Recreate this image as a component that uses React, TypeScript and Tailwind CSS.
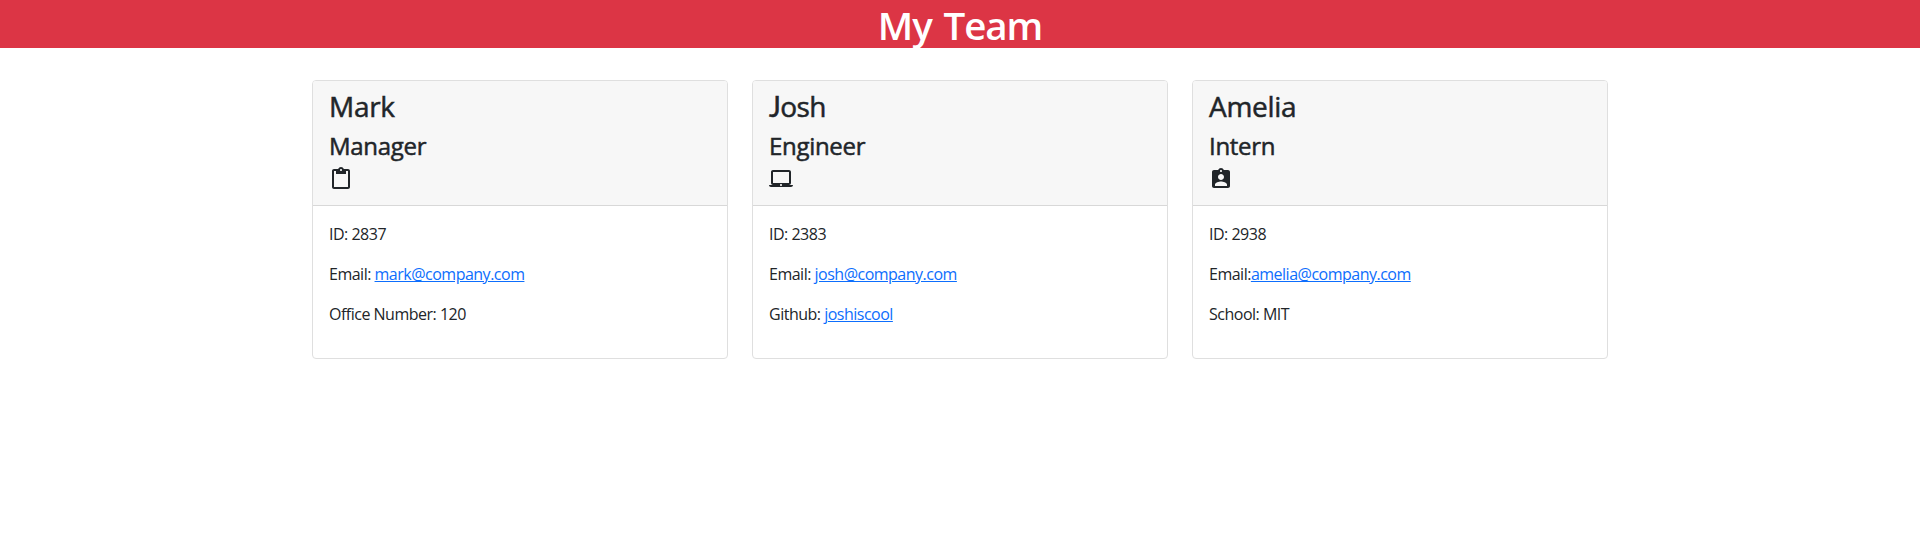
import type { ReactNode } from 'react';
import { MdAssignmentInd, MdContentPaste, MdLaptopMac } from 'react-icons/md';

type CardProps = { name: string; role: string; icon: ReactNode; children: ReactNode; nameClass?: string };

function Mail({ children }: { children: ReactNode }) {
  return <a href="#" className="text-[#0d6efd] underline">{children}</a>;
}

function Card({ name, role, icon, children, nameClass = 'tracking-[-0.3px]' }: CardProps) {
  return (
    <section className="flex h-[279px] w-[416px] flex-col overflow-hidden rounded border border-[#dfdfdf] bg-white">
      <header className="h-[125px] shrink-0 border-b border-[#d8d8d8] bg-[#f7f7f7] px-4 pt-[9px]">
        <h3 className={`mb-2 text-[28px] leading-[33.6px] [-webkit-text-stroke:0.5px_#212529] ${nameClass}`}>{name}</h3>
        <h4 className="mb-[7px] text-[24px] leading-[28.8px] tracking-[-0.3px] [-webkit-text-stroke:0.5px_#212529]">{role}</h4>
        {icon}
      </header>
      <div className="flex flex-col gap-4 p-4 text-[16px] leading-6 tracking-[-0.5px]">{children}</div>
    </section>
  );
}

export default function App() {
  return (
    <main className="min-h-[552px] bg-white font-['Open_Sans',sans-serif] text-[#212529]">
      <h1 className="h-12 bg-[#dc3545] text-center text-[38.5px] leading-[51px] font-semibold tracking-[-1.1px] text-white [word-spacing:3px]">My Team</h1>
      <div className="flex justify-center gap-6 pt-8">
        <Card name="Mark" role="Manager" icon={<MdContentPaste size={24} />}>
          <p>ID: 2837</p>
          <p>Email: <Mail>mark@company.com</Mail></p>
          <p>Office Number: 120</p>
        </Card>
        <Card name="Josh" role="Engineer" icon={<MdLaptopMac size={24} />} nameClass="tracking-[-0.6px] first-letter:font-['Lato']">
          <p>ID: 2383</p>
          <p>Email: <Mail>josh@company.com</Mail></p>
          <p>Github: <Mail>joshiscool</Mail></p>
        </Card>
        <Card name="Amelia" role="Intern" icon={<MdAssignmentInd size={24} />}>
          <p>ID: 2938</p>
          <p>Email:<Mail>amelia@company.com</Mail></p>
          <p>School: MIT</p>
        </Card>
      </div>
    </main>
  );
}
